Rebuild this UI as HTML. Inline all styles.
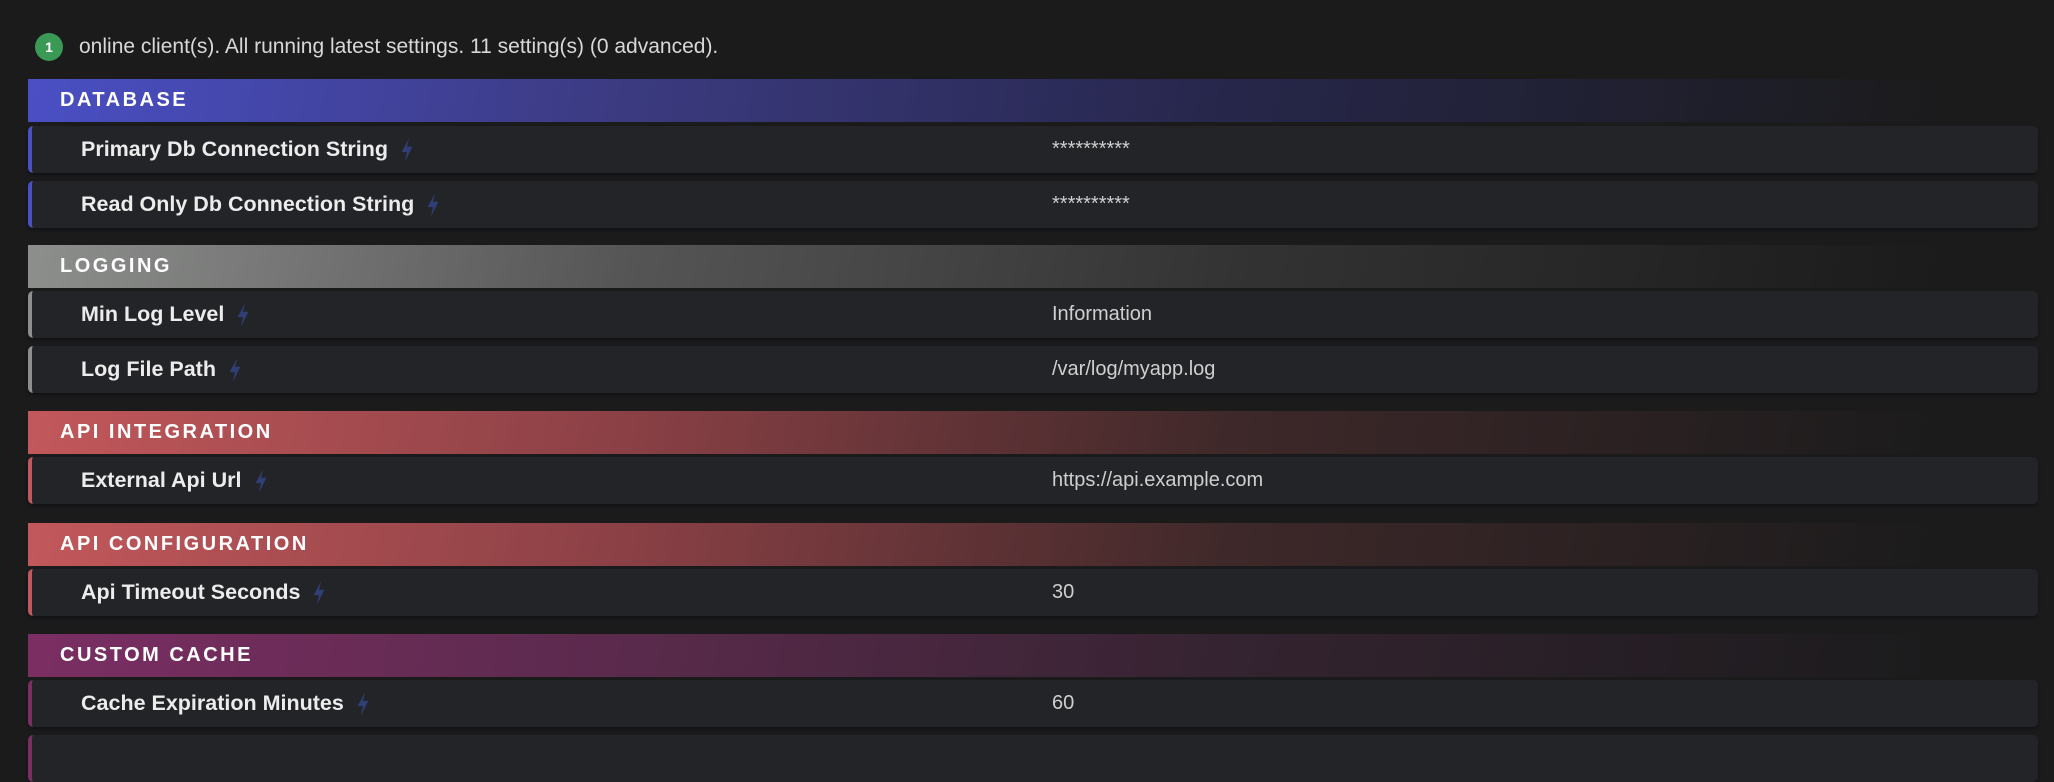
<!DOCTYPE html>
<html><head><style>
html,body{margin:0;padding:0;background:#1b1b1c;width:2054px;height:744px;overflow:hidden;font-family:"Liberation Sans",Arial,sans-serif;}
.top{position:absolute;left:35px;top:32px;height:30px;display:flex;align-items:center;color:#d8d8d8;font-size:21px;}
.badge{width:28px;height:28px;border-radius:50%;background:#3a9a55;color:#fff;font-size:14px;font-weight:bold;display:flex;align-items:center;justify-content:center;margin-right:16px;}
.h{position:absolute;left:28px;width:2012px;height:43px;color:#fff;font-weight:bold;font-size:20px;letter-spacing:2.5px;line-height:43px;padding-left:32px;box-sizing:border-box;}
.r{position:absolute;left:28px;width:2010px;height:47px;background:#232427;border-radius:5px;box-sizing:border-box;border-left:4px solid;box-shadow:0 2px 3px rgba(0,0,0,.35);}
.l{position:absolute;left:49px;top:0;line-height:47px;color:#ececec;font-size:21.5px;font-weight:bold;display:flex;align-items:center;height:47px;}
.l svg{margin-left:11px}
.v{position:absolute;left:1020px;top:0;line-height:47px;color:#cfcfcf;font-size:20px;}
</style></head><body>
<div class="top"><div class="badge">1</div>online client(s). All running latest settings. 11 setting(s) (0 advanced).</div>

<div class="h" style="top:79px;background:linear-gradient(100deg,#4a4fc4 0%,#3b3a80 30%,#26264a 60%,#1b1b1c 95%)">DATABASE</div>
<div class="r" style="top:126px;border-color:#4a4fc4"><div class="l">Primary Db Connection String<svg width="16" height="26" viewBox="0 0 14 24"><path d="M9 1 L2 14 H7 L5 23 L12 9 H7 Z" fill="#2f3f75"/></svg></div><div class="v">**********</div></div>
<div class="r" style="top:181px;border-color:#4a4fc4"><div class="l">Read Only Db Connection String<svg width="16" height="26" viewBox="0 0 14 24"><path d="M9 1 L2 14 H7 L5 23 L12 9 H7 Z" fill="#2f3f75"/></svg></div><div class="v">**********</div></div>

<div class="h" style="top:245px;background:linear-gradient(100deg,#8d8f8d 0%,#555 30%,#333 60%,#1b1b1c 95%)">LOGGING</div>
<div class="r" style="top:291px;border-color:#8d8f8d"><div class="l">Min Log Level<svg width="16" height="26" viewBox="0 0 14 24"><path d="M9 1 L2 14 H7 L5 23 L12 9 H7 Z" fill="#2f3f75"/></svg></div><div class="v">Information</div></div>
<div class="r" style="top:346px;border-color:#8d8f8d"><div class="l">Log File Path<svg width="16" height="26" viewBox="0 0 14 24"><path d="M9 1 L2 14 H7 L5 23 L12 9 H7 Z" fill="#2f3f75"/></svg></div><div class="v">/var/log/myapp.log</div></div>

<div class="h" style="top:411px;background:linear-gradient(100deg,#c2585b 0%,#8a4045 30%,#3e2829 60%,#1b1b1c 95%)">API INTEGRATION</div>
<div class="r" style="top:457px;border-color:#c2585b"><div class="l">External Api Url<svg width="16" height="26" viewBox="0 0 14 24"><path d="M9 1 L2 14 H7 L5 23 L12 9 H7 Z" fill="#2f3f75"/></svg></div><div class="v">https://api.example.com</div></div>

<div class="h" style="top:523px;background:linear-gradient(100deg,#c2585b 0%,#8a4045 30%,#3e2829 60%,#1b1b1c 95%)">API CONFIGURATION</div>
<div class="r" style="top:569px;border-color:#c2585b"><div class="l">Api Timeout Seconds<svg width="16" height="26" viewBox="0 0 14 24"><path d="M9 1 L2 14 H7 L5 23 L12 9 H7 Z" fill="#2f3f75"/></svg></div><div class="v">30</div></div>

<div class="h" style="top:634px;background:linear-gradient(100deg,#7b2e63 0%,#5a2a4c 30%,#342330 60%,#1b1b1c 95%)">CUSTOM CACHE</div>
<div class="r" style="top:680px;border-color:#7b2e63"><div class="l">Cache Expiration Minutes<svg width="16" height="26" viewBox="0 0 14 24"><path d="M9 1 L2 14 H7 L5 23 L12 9 H7 Z" fill="#2f3f75"/></svg></div><div class="v">60</div></div>
<div class="r" style="top:735px;border-color:#7b2e63"></div>
</body></html>
